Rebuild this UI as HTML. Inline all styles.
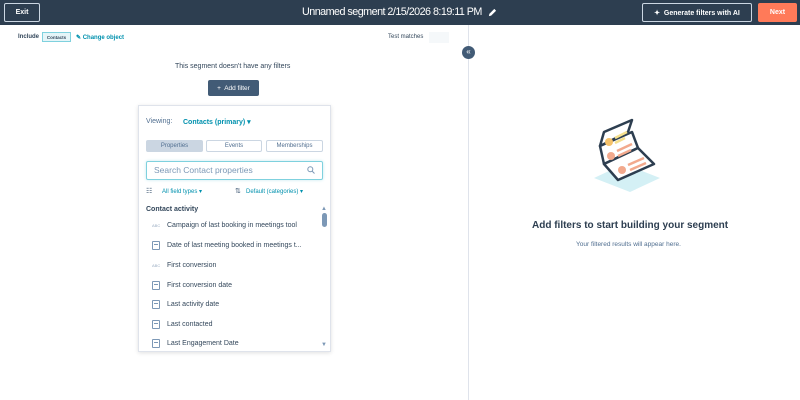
<!DOCTYPE html>
<html><head><meta charset="utf-8"><style>
*{box-sizing:border-box;margin:0;padding:0}
body{width:800px;height:400px;overflow:hidden;background:#fff;font-family:"Liberation Sans",sans-serif;color:#33475b;position:relative}
.abs{position:absolute}
.hdr{left:0;top:0;width:800px;height:25px;background:#2d3e50}
.btn{position:absolute;border:1px solid #cbd6e2;color:#fff;font-size:7px;font-weight:bold;display:flex;align-items:center;justify-content:center;border-radius:2px}
.t{position:absolute;white-space:nowrap}
.item{position:absolute;left:152px;font-size:7px;color:#33475b;display:flex;align-items:center;white-space:nowrap;height:10px}
.ic{width:8px;height:9px;border:1px solid #7c98b6;border-radius:1px;margin-right:7px;position:relative}
.ic:after{content:"";position:absolute;left:1px;right:1px;top:2px;border-top:1px solid #7c98b6}
.abc{font-size:4px;color:#99acc2;width:8px;margin-right:7px}
.tab{position:absolute;top:140px;height:12px;border:1px solid #cbd6e2;border-radius:2px;font-size:6px;color:#516f90;display:flex;align-items:center;justify-content:center}
</style></head><body>
<div class="abs hdr"></div>
<div class="btn" style="left:4px;top:3px;width:36px;height:19px">Exit</div>
<div class="t" style="left:302px;top:6px;font-size:10.8px;letter-spacing:-0.55px;color:#fff">Unnamed segment 2/15/2026 8:19:11 PM</div>
<svg class="abs" style="left:488px;top:8px" width="9" height="9" viewBox="0 0 10 10"><path d="M1 9 L1.5 6.5 L7 1 L9 3 L3.5 8.5 Z" fill="#fff"/></svg>
<div class="btn" style="left:642px;top:3px;width:110px;height:19px">✦&nbsp; Generate filters with AI</div>
<div class="btn" style="left:758px;top:3px;width:39px;height:19px;background:#ff7a59;border-color:#ff7a59">Next</div>

<div class="t" style="left:18px;top:34px;font-size:6px;font-weight:bold">Include</div>
<div class="abs" style="left:42px;top:32px;width:29px;height:10px;border:1px solid #7fd1de;background:#e5f5f8;font-size:4.5px;font-weight:bold;display:flex;align-items:center;justify-content:center">Contacts</div>
<div class="t" style="left:76px;top:34px;font-size:6px;font-weight:bold;color:#0091ae">✎ Change object</div>
<div class="t" style="left:388px;top:34px;font-size:6px">Test matches</div>
<div class="abs" style="left:429px;top:32px;width:20px;height:11px;background:#f5f8fa"></div>
<div class="abs" style="left:468px;top:25px;width:1px;height:375px;background:#dfe3eb"></div>
<div class="abs" style="left:462px;top:46px;width:13px;height:13px;border-radius:50%;background:#425b76;color:#fff;font-size:8px;line-height:12px;text-align:center">«</div>

<div class="t" style="left:175px;top:63px;font-size:7px;color:#33475b">This segment doesn't have any filters</div>
<div class="abs" style="left:208px;top:80px;width:51px;height:16px;background:#425b76;border-radius:2px;color:#fff;font-size:6.5px;display:flex;align-items:center;justify-content:center">+&nbsp; Add filter</div>

<div class="abs" style="left:138px;top:105px;width:193px;height:247px;border:1px solid #dfe3eb;box-shadow:0 1px 4px rgba(0,0,0,.12);background:#fff"></div>
<div class="t" style="left:146px;top:118px;font-size:7px;color:#516f90">Viewing:</div>
<div class="t" style="left:183px;top:118px;font-size:7px;font-weight:bold;color:#0091ae">Contacts (primary) ▾</div>
<div class="tab" style="left:146px;width:57px;background:#cbd6e2">Properties</div>
<div class="tab" style="left:206px;width:56px">Events</div>
<div class="tab" style="left:266px;width:57px">Memberships</div>
<div class="abs" style="left:146px;top:161px;width:177px;height:19px;border:1px solid #7fd1de;border-radius:2px;box-shadow:0 0 3px #c6e9ef"></div>
<div class="t" style="left:154px;top:165px;font-size:8.5px;color:#7c98b6">Search Contact properties</div>
<svg class="abs" style="left:307px;top:166px" width="8" height="8" viewBox="0 0 8 8"><circle cx="3.3" cy="3.3" r="2.5" fill="none" stroke="#7c98b6" stroke-width="1"/><path d="M5 5 L7.5 7.5" stroke="#7c98b6" stroke-width="1"/></svg>
<div class="t" style="left:146px;top:187px;font-size:7px;color:#425b76">☷</div>
<div class="t" style="left:162px;top:188px;font-size:6px;color:#0091ae">All field types ▾</div>
<div class="t" style="left:235px;top:187px;font-size:7px;color:#425b76">⇅</div>
<div class="t" style="left:246px;top:188px;font-size:6px;color:#0091ae">Default (categories) ▾</div>
<div class="t" style="left:146px;top:206px;font-size:7px;font-weight:bold">Contact activity</div>
<div class="t" style="left:321px;top:206px;font-size:6px;color:#7c98b6">▲</div>
<div class="abs" style="left:322px;top:213px;width:5px;height:14px;border-radius:3px;background:#7c98b6"></div>
<div class="t" style="left:321px;top:342px;font-size:6px;color:#7c98b6">▼</div>
<div class="item" style="top:220px"><span class="abc">ABC</span>Campaign of last booking in meetings tool</div>
<div class="item" style="top:240px"><span class="ic"></span>Date of last meeting booked in meetings t...</div>
<div class="item" style="top:260px"><span class="abc">ABC</span>First conversion</div>
<div class="item" style="top:280px"><span class="ic"></span>First conversion date</div>
<div class="item" style="top:299px"><span class="ic"></span>Last activity date</div>
<div class="item" style="top:319px"><span class="ic"></span>Last contacted</div>
<div class="item" style="top:338px"><span class="ic"></span>Last Engagement Date</div>

<svg class="abs" style="left:592px;top:118px" width="70" height="75" viewBox="0 0 70 75">
<path d="M2 60 L38 74 L68 60 L32 46 Z" fill="#d4f0f5"/>
<path d="M8 28 L36 14 L40 2 L12 14 Z" fill="#fff" stroke="#2d3e50" stroke-width="2.5" stroke-linejoin="round"/>
<path d="M8 28 L40 14 L46 30 L12 46 Z" fill="#fff" stroke="#2d3e50" stroke-width="2.5" stroke-linejoin="round"/>
<path d="M12 46 L46 30 L62 46 L26 62 Z" fill="#fff" stroke="#2d3e50" stroke-width="2.5" stroke-linejoin="round"/>
<circle cx="17" cy="24" r="4" fill="#f5c26b"/><path d="M23 20 L35 14 M23 25 L33 20" stroke="#f5df8d" stroke-width="2.5"/>
<circle cx="19" cy="38" r="4" fill="#f2a98d"/><path d="M25 33 L40 26 M26 38 L39 32" stroke="#f2a98d" stroke-width="2.5"/>
<circle cx="30" cy="52" r="4" fill="#f2a98d"/><path d="M36 47 L52 40 M38 52 L54 45" stroke="#f2a98d" stroke-width="2.5"/>
</svg>
<div class="t" style="left:532px;top:220px;font-size:10px;font-weight:bold;color:#2d3e50">Add filters to start building your segment</div>
<div class="t" style="left:576px;top:241px;font-size:6.5px;color:#516f90">Your filtered results will appear here.</div>
</body></html>
